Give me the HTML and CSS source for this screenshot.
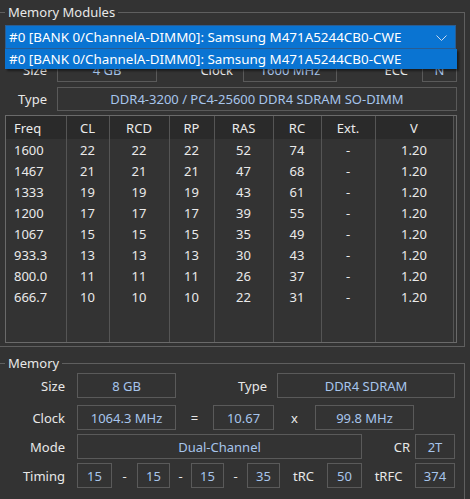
FILE: index.html
```html
<!DOCTYPE html>
<html lang="en">
<head>
    <meta charset="UTF-8">
    <meta name="viewport" content="width=device-width, initial-scale=1.0">
    <title>Memory</title>
    <link rel="stylesheet" href="styles.css">
</head>
<body>

<!-- Memory Modules -->
<fieldset class="group modules">
    <legend>Memory Modules</legend>

    <div class="combo">
        <div class="combo-value">#0 [BANK 0/ChannelA-DIMM0]: Samsung M471A5244CB0-CWE</div>
        <svg class="chevron" width="11" height="6" viewBox="0 0 11 6">
            <polyline points="0.5,0.5 5.5,5.5 10.5,0.5" fill="none" stroke="#c9d9ee" stroke-width="1"/>
        </svg>
        <div class="combo-list">
            <div class="combo-item">#0 [BANK 0/ChannelA-DIMM0]: Samsung M471A5244CB0-CWE</div>
        </div>
    </div>

    <div class="row mod-row">
        <span class="lbl mod-lbl">Size</span>
        <span class="box mod-size">4 GB</span>
        <span class="lbl mod-clock-lbl">Clock</span>
        <span class="box mod-clock">1600 MHz</span>
        <span class="lbl mod-ecc-lbl">ECC</span>
        <span class="box mod-ecc">N</span>
    </div>

    <div class="row mod-row">
        <span class="lbl mod-lbl">Type</span>
        <span class="box mod-type">DDR4-3200 / PC4-25600 DDR4 SDRAM SO-DIMM</span>
    </div>

    <div class="timings">
        <table>
            <colgroup>
                <col class="c-freq"><col class="c-cl"><col class="c-rcd"><col class="c-rp">
                <col class="c-ras"><col class="c-rc"><col class="c-ext"><col class="c-v">
            </colgroup>
            <thead>
                <tr>
                    <th class="freq">Freq</th><th>CL</th><th>RCD</th><th>RP</th>
                    <th>RAS</th><th>RC</th><th>Ext.</th><th>V</th>
                </tr>
            </thead>
            <tbody>
                <tr><td class="freq">1600</td><td>22</td><td>22</td><td>22</td><td>52</td><td>74</td><td>-</td><td>1.20</td></tr>
                <tr><td class="freq">1467</td><td>21</td><td>21</td><td>21</td><td>47</td><td>68</td><td>-</td><td>1.20</td></tr>
                <tr><td class="freq">1333</td><td>19</td><td>19</td><td>19</td><td>43</td><td>61</td><td>-</td><td>1.20</td></tr>
                <tr><td class="freq">1200</td><td>17</td><td>17</td><td>17</td><td>39</td><td>55</td><td>-</td><td>1.20</td></tr>
                <tr><td class="freq">1067</td><td>15</td><td>15</td><td>15</td><td>35</td><td>49</td><td>-</td><td>1.20</td></tr>
                <tr><td class="freq">933.3</td><td>13</td><td>13</td><td>13</td><td>30</td><td>43</td><td>-</td><td>1.20</td></tr>
                <tr><td class="freq">800.0</td><td>11</td><td>11</td><td>11</td><td>26</td><td>37</td><td>-</td><td>1.20</td></tr>
                <tr><td class="freq">666.7</td><td>10</td><td>10</td><td>10</td><td>22</td><td>31</td><td>-</td><td>1.20</td></tr>
                <tr class="filler"><td></td><td></td><td></td><td></td><td></td><td></td><td></td><td></td></tr>
            </tbody>
        </table>
    </div>
</fieldset>

<!-- Memory -->
<fieldset class="group memory">
    <legend>Memory</legend>

    <div class="row mem-row first">
        <span class="lbl mem-lbl">Size</span>
        <span class="box mem-size">8 GB</span>
        <span class="lbl mem-type-lbl">Type</span>
        <span class="box mem-type">DDR4 SDRAM</span>
    </div>

    <div class="row mem-row">
        <span class="lbl mem-lbl">Clock</span>
        <span class="box mem-size">1064.3 MHz</span>
        <span class="sym eq">=</span>
        <span class="box mem-mult">10.67</span>
        <span class="sym times">x</span>
        <span class="box mem-bus">99.8 MHz</span>
    </div>

    <div class="row mem-row">
        <span class="lbl mem-lbl">Mode</span>
        <span class="box mem-mode">Dual-Channel</span>
        <span class="lbl mem-cr-lbl">CR</span>
        <span class="box mem-cr">2T</span>
    </div>

    <div class="row mem-row">
        <span class="lbl mem-lbl">Timing</span>
        <span class="box t-first">15</span>
        <span class="sym dash-a">-</span>
        <span class="box t-small">15</span>
        <span class="sym dash-b">-</span>
        <span class="box t-small">15</span>
        <span class="sym dash-c">-</span>
        <span class="box t-small">35</span>
        <span class="sym trc">tRC</span>
        <span class="box t-first">50</span>
        <span class="sym trfc">tRFC</span>
        <span class="box mem-cr">374</span>
    </div>
</fieldset>

</body>
</html>
```

FILE: styles.css
```css
* {
    box-sizing: border-box;
}
body {
    margin: 0;
    width: 470px;
    height: 499px;
    overflow: hidden;
    background-color: #333333;
    color: #e8e8e8;
    font-family: "Noto Sans", "Open Sans", sans-serif;
    font-size: 13px;
}

/* group boxes */
.group {
    margin: 4px 5px 0 0;
    padding: 5px 7px 3px 5px;
    border: 1px solid #5f5f5f;
    border-left: none;
    min-width: 0;
}
.group legend {
    margin-left: 5px;
    padding: 0 3px;
    line-height: 16px;
    color: #e8e8e8;
}
.modules legend {
    margin-left: 0;
}
.memory {
    margin-top: 8px;
    padding: 2px 7px 8px 0;
}

.row {
    display: flex;
    align-items: center;
}
.lbl, .sym {
    flex: none;
    white-space: nowrap;
}
.lbl {
    text-align: right;
}
.sym {
    text-align: center;
}
.box {
    flex: none;
    height: 100%;
    border: 1px solid #5a5a5a;
    color: #a7c5ec;
    text-align: center;
    white-space: nowrap;
    overflow: hidden;
    display: flex;
    align-items: center;
    justify-content: center;
}

/* combo box */
.combo {
    position: relative;
    height: 24px;
    width: 451px;
    margin-bottom: 9px;
    background-color: #0a74d2;
    border: 1px solid #2a5d92;
    color: #fff;
    font-size: 13.4px;
}
.combo-value {
    line-height: 22px;
    padding-left: 3px;
    white-space: nowrap;
}
.chevron {
    position: absolute;
    right: 8px;
    top: 9px;
}
.combo-list {
    position: absolute;
    left: -1px;
    top: 23px;
    width: 452px;
    height: 20px;
    background-color: #0a74d2;
    box-shadow: 2px 2px 2px rgba(0, 0, 0, 0.45);
    z-index: 2;
}
.combo-item {
    line-height: 20px;
    padding-left: 4px;
    white-space: nowrap;
}

/* module rows */
.mod-row {
    height: 24px;
    margin-bottom: 5px;
}
.mod-row + .mod-row {
    margin-bottom: 4px;
}
.mod-lbl { width: 42px; }
.mod-size { width: 100px; margin-left: 10px; }
.mod-clock-lbl { width: 76px; }
.mod-clock { width: 94px; margin-left: 10px; }
.mod-ecc-lbl { width: 71px; }
.mod-ecc { width: 35px; margin-left: 14px; }
.mod-type { width: 400px; margin-left: 10px; }

/* timings table */
.timings {
    height: 228px;
    width: 452px;
    border: 1px solid #6a6a6a;
}
.timings table {
    width: 447px;
    table-layout: fixed;
    border-collapse: collapse;
}
.c-freq { width: 60px; }
.c-cl { width: 43px; }
.c-rcd { width: 60px; }
.c-rp { width: 45px; }
.c-ras { width: 59px; }
.c-rc { width: 48px; }
.c-ext { width: 54px; }
.c-v { width: 78px; }
.timings th, .timings td {
    padding: 0;
    text-align: center;
    font-weight: normal;
    border-right: 1px solid #555555;
    color: #eaeaea;
}
.timings th {
    height: 23px;
    background-color: #2a2a2a;
}
.timings td {
    height: 21px;
}
.timings .freq {
    text-align: left;
    padding-left: 8px;
}
.timings .filler td {
    height: 35px;
}

/* memory rows */
.mem-row {
    height: 25px;
    margin-bottom: 4px;
}
.mem-row.first {
    margin-bottom: 7px;
}
.mem-lbl { width: 65px; }
.mem-size { width: 99px; margin-left: 12px; }
.mem-type-lbl { width: 91px; }
.mem-type { width: 178px; margin-left: 10px; }
.eq { width: 37px; }
.mem-mult { width: 61px; }
.times { width: 41px; }
.mem-bus { width: 99px; }
.mem-mode { width: 285px; margin-left: 12px; }
.mem-cr-lbl { width: 48px; }
.mem-cr { width: 40px; margin-left: 5px; }
.t-first { width: 35px; margin-left: 12px; }
.t-small { width: 33px; }
.dash-a { width: 25px; }
.dash-b { width: 21px; }
.dash-c { width: 23px; }
.trc { width: 47px; }
.trfc { width: 53px; }
.trc + .t-first { margin-left: 0; }
.trfc + .mem-cr { margin-left: 0; }
```
